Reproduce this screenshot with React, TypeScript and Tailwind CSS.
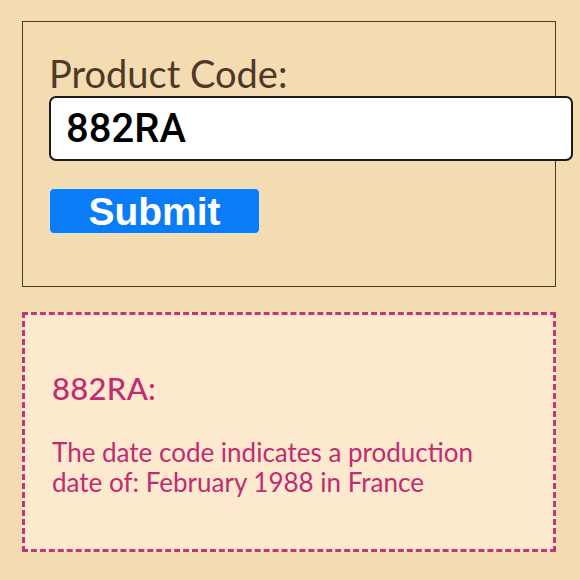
import React from 'react';

export default function App() {
  return (
    <div className="min-h-[580px] w-[580px] bg-[#f3dcb2] px-[22px] pt-[21px] flex flex-col gap-[25px]">
      <div className="w-[534px] h-[266px] border border-[#4b3a28] pl-[26px] pt-[31px] flex flex-col">
        <label className="text-[38px] leading-[40px] text-[#4d3926] font-['Lato',sans-serif]">
          Product Code:
        </label>
        <input
          readOnly
          value="882RA"
          className="mt-[3px] w-[524px] h-[65px] shrink-0 rounded-[7px] border-2 border-[#1a1a1a] bg-white pl-[15px] text-[40px] font-medium text-black font-['Roboto',sans-serif] outline-none"
        />
        <button className="mt-[27px] w-[211px] h-[46px] rounded-[5px] border border-[#d7e8fb] bg-[#0a7cf8] text-white text-[39px] leading-none font-bold font-['Liberation_Sans',sans-serif]">
          Submit
        </button>
      </div>
      <div className="w-[534px] h-[240px] border-[3px] border-dashed border-[#c33776] bg-[#fde9cd] pl-[27px] pt-[56px] text-[#c02c73] font-['Lato',sans-serif]">
        <h2 className="text-[31px] leading-[34px] font-medium tracking-[0.3px]">882RA:</h2>
        <p className="mt-[32px] text-[26px] leading-[30px] w-[450px]">
          The date code indicates a production date of: February 1988 in France
        </p>
      </div>
    </div>
  );
}
